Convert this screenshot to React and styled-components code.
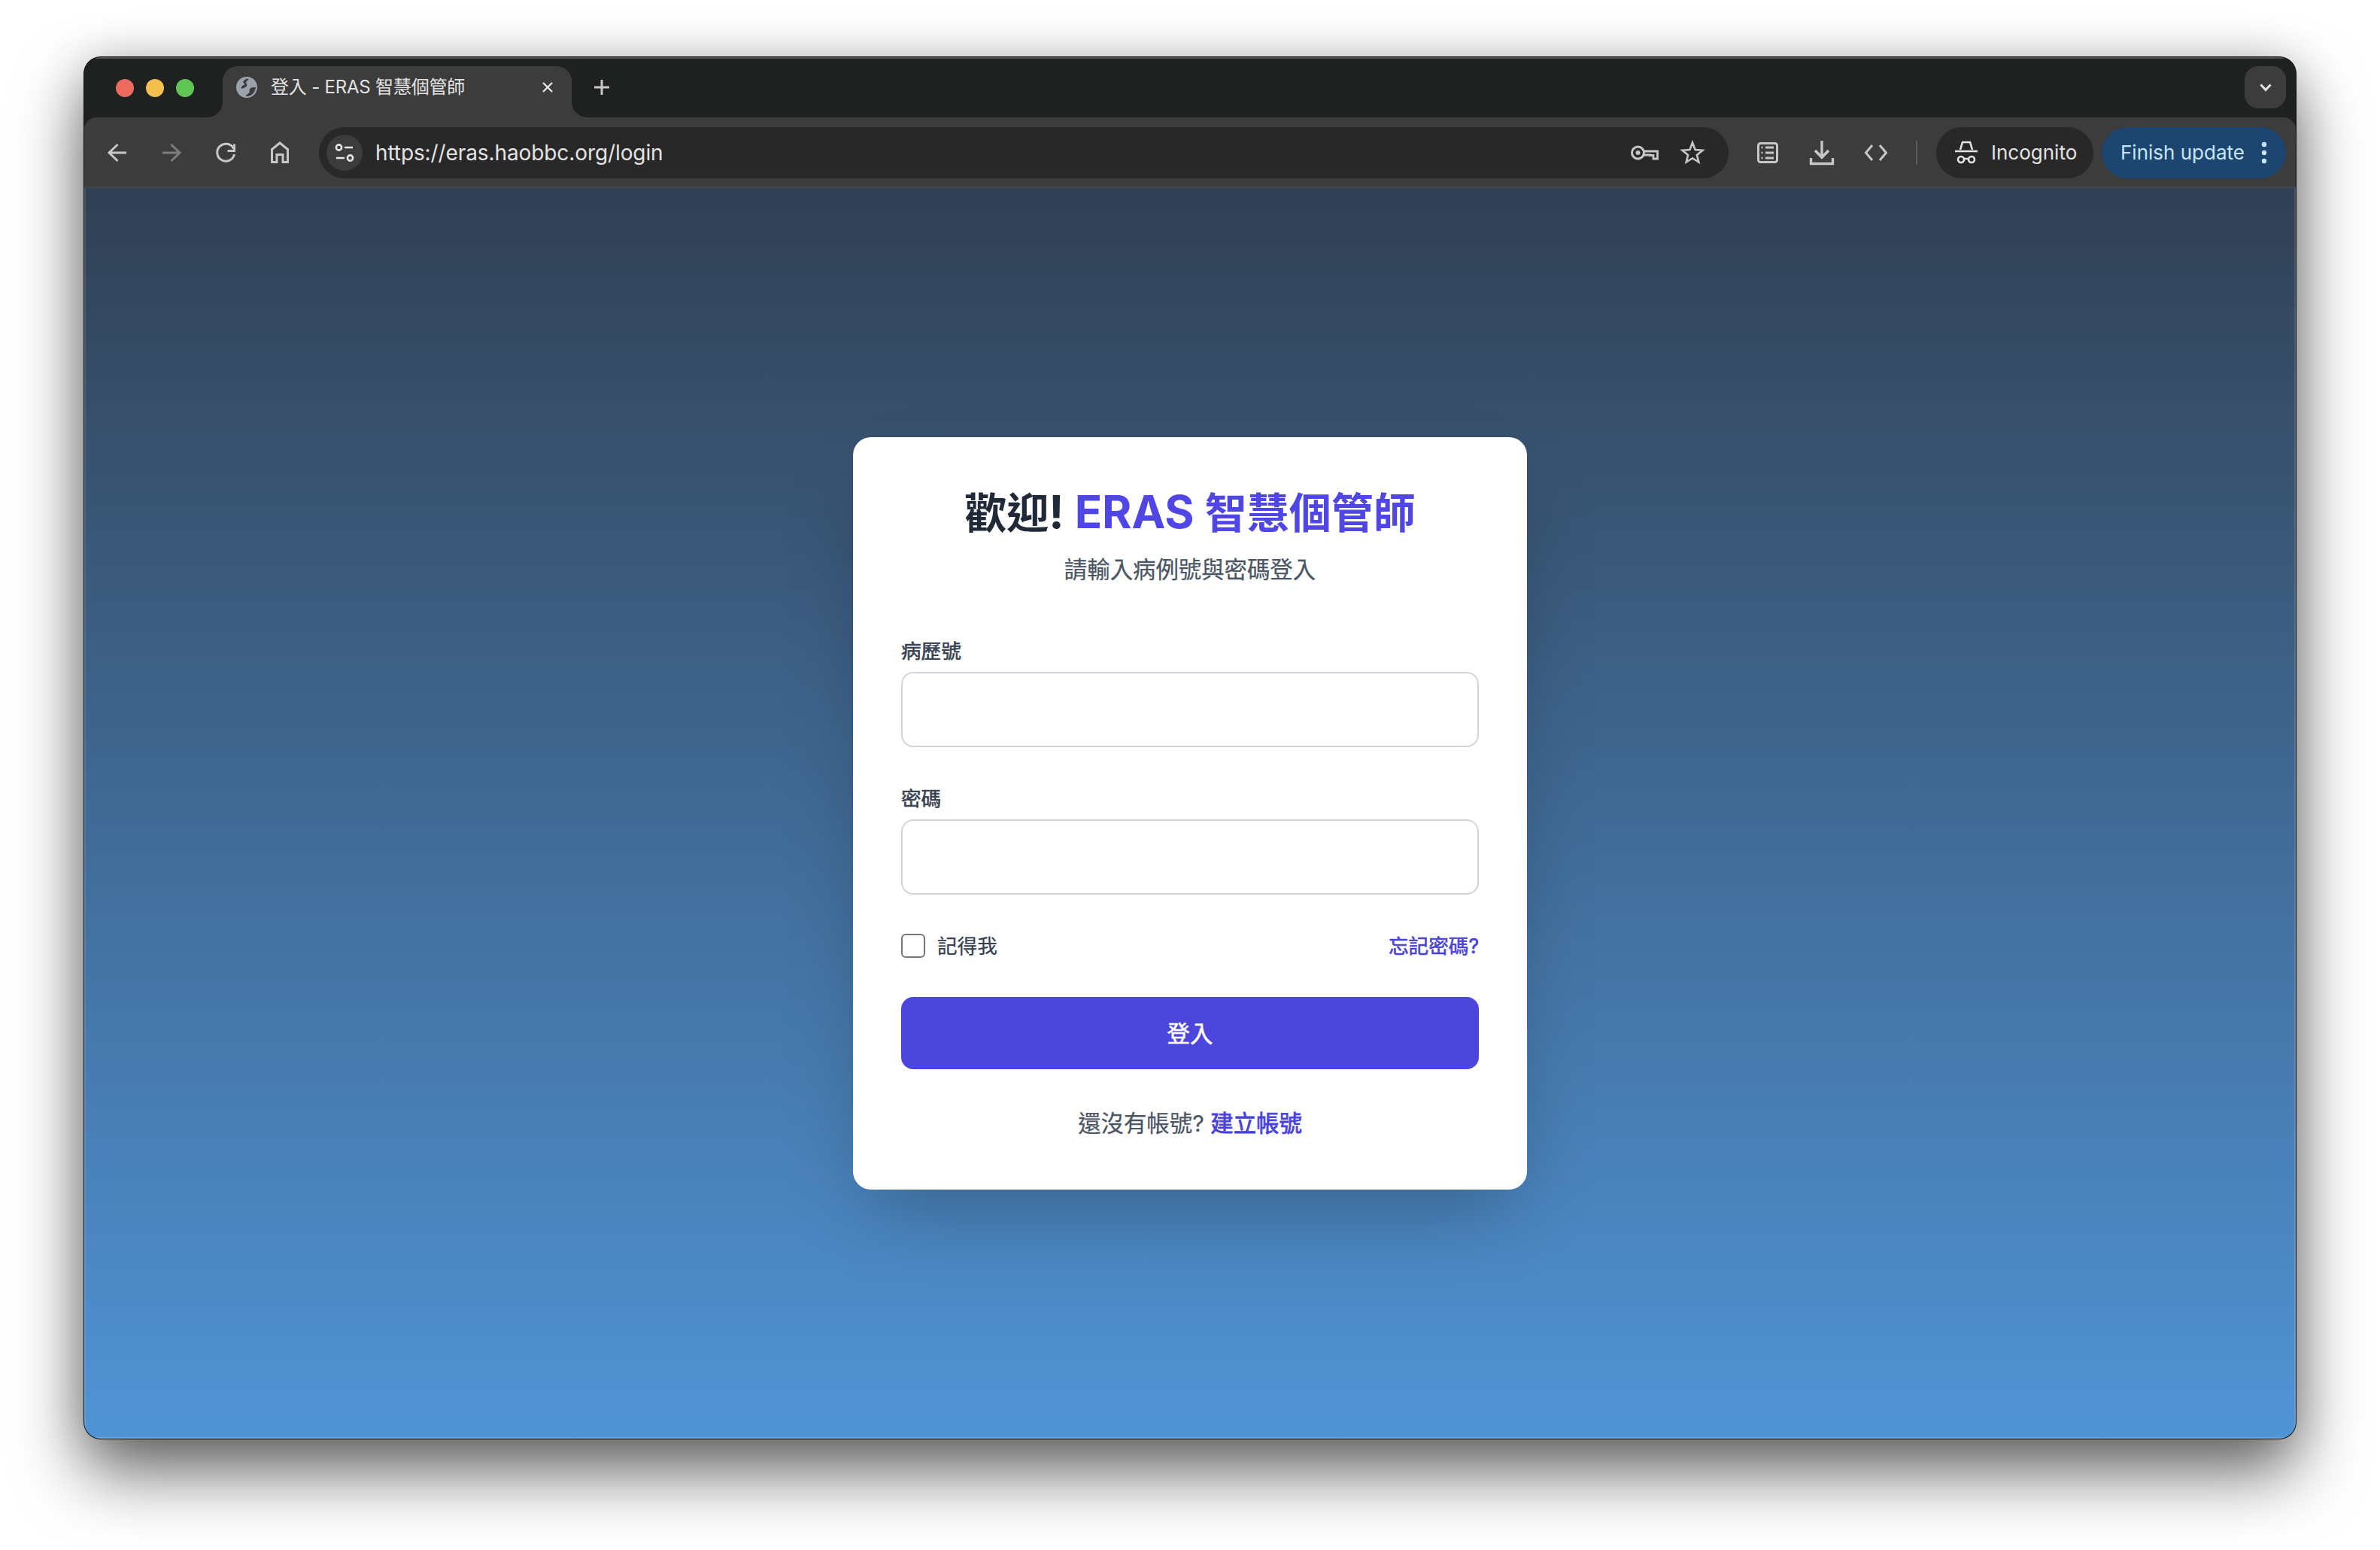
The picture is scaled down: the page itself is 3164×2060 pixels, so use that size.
import React from "react"
import styled, { createGlobalStyle } from "styled-components"

const GlobalStyle = createGlobalStyle`
  html, body {
    margin: 0;
    background: #fff;
    overflow: hidden;
  }
  * {
    box-sizing: border-box;
  }
`

const uiFont = `Inter, "Noto Sans CJK TC", sans-serif`

const Stage = styled.div`
  display: flex;
  width: 3164px;
  height: 2060px;
  padding: 76px 112px 148px 112px;
`

const BrowserWindow = styled.div`
  flex: 1;
  display: flex;
  flex-direction: column;
  overflow: hidden;
  border-radius: 22px;
  background: #1f2120;
  box-shadow: 0 0 0 1px #0c0c0c, 0 44px 90px rgba(0, 0, 0, 0.6), 0 0 60px rgba(0, 0, 0, 0.16);
`

const TabStrip = styled.div`
  display: flex;
  align-items: flex-end;
  height: 80px;
  padding: 0 13px 0 42px;
  box-shadow: inset 0 2px 0 #525252;
`

const Lights = styled.div`
  display: flex;
  gap: 16px;
  align-self: flex-start;
  margin-top: 29px;
  margin-right: 38px;
`

const Light = styled.span`
  width: 24px;
  height: 24px;
  border-radius: 50%;
  background: ${(p) => p.$color};
`

const Tab = styled.div`
  position: relative;
  display: flex;
  align-items: center;
  width: 464px;
  height: 68px;
  padding: 0 20px 12px 17px;
  border-radius: 20px 20px 0 0;
  background: #3c3c3c;

  &::before,
  &::after {
    content: "";
    position: absolute;
    bottom: 0;
    width: 20px;
    height: 20px;
  }
  &::before {
    left: -20px;
    background: radial-gradient(circle at 0 0, transparent 19.5px, #3c3c3c 20px);
  }
  &::after {
    right: -20px;
    background: radial-gradient(circle at 100% 0, transparent 19.5px, #3c3c3c 20px);
  }
`

const TabTitle = styled.span`
  flex: 1;
  margin-left: 17px;
  font: 400 24px/32px ${uiFont};
  letter-spacing: -0.2px;
  color: #e3e3e3;
  white-space: nowrap;
`

const IconSlot = styled.span`
  flex: none;
  display: flex;
  align-items: center;
  justify-content: center;
  width: ${(p) => p.$w || 72}px;
  height: ${(p) => p.$h || 68}px;
  color: ${(p) => p.$color || "#c7c7c7"};
`

const NewTab = styled(IconSlot)`
  align-self: flex-start;
  margin: 20px 0 0 20px;
  height: 40px;
  width: 40px;
`

const TabSearch = styled.div`
  display: flex;
  align-items: center;
  justify-content: center;
  align-self: flex-start;
  width: 55px;
  height: 56px;
  margin: 12px 0 0 auto;
  border-radius: 18px;
  background: #3c3c3c;
  color: #e3e3e3;
`

const Toolbar = styled.div`
  display: flex;
  align-items: center;
  height: 94px;
  padding: 2px 13px 0 8px;
  border-bottom: 2px solid #42474e;
  border-radius: 16px 16px 0 0;
  background: #3c3c3c;
`

const Omnibox = styled.div`
  flex: 1;
  display: flex;
  align-items: center;
  height: 68px;
  margin: 0 16px 0 16px;
  padding: 0 16px 0 10px;
  border-radius: 34px;
  background: #282828;
`

const SiteButton = styled.span`
  display: flex;
  align-items: center;
  justify-content: center;
  width: 48px;
  height: 48px;
  border-radius: 50%;
  background: #3c3c3c;
  color: #e3e3e3;
`

const Url = styled.span`
  flex: 1;
  margin-left: 17px;
  font: 400 28px/36px ${uiFont};
  letter-spacing: -0.1px;
  color: #e3e3e3;
`

const Separator = styled.span`
  width: 2px;
  height: 32px;
  margin: 0 25px 0 17px;
  background: #5c5c5c;
`

const Pill = styled.div`
  display: flex;
  align-items: center;
  height: 68px;
  border-radius: 34px;
  font: 400 26px/34px ${uiFont};
  white-space: nowrap;
  background: ${(p) => p.$bg};
  color: ${(p) => p.$fg};
`

const IncognitoPill = styled(Pill)`
  width: 209px;
  padding-left: 24px;
  gap: 17px;
`

const UpdatePill = styled(Pill)`
  width: 245px;
  margin-left: 11px;
  padding-left: 25px;
  gap: 19px;
`

const Page = styled.main`
  flex: 1;
  display: flex;
  align-items: center;
  justify-content: center;
  background: linear-gradient(180deg, #314054 0%, #5094d6 100%);
  box-shadow: inset 2px 0 0 rgba(255, 255, 255, 0.12), inset -2px 0 0 rgba(255, 255, 255, 0.12),
    inset 0 -2px 0 rgba(255, 255, 255, 0.16);
`

const Card = styled.form`
  width: 896px;
  padding: 64px;
  border-radius: 24px;
  background: #fff;
  box-shadow: 0 50px 100px -24px rgba(0, 0, 0, 0.25);
  font-family: ${uiFont};
`

const Header = styled.header`
  margin-bottom: 64px;
  text-align: center;
`

const Title = styled.h1`
  height: 72px;
  margin: 0;
  padding-top: 1px;
  font-size: 56px;
  line-height: 72px;
  font-weight: 700;
  color: #1f2937;
`

const TitleLatin = styled.span`
  font-size: 60px;
  line-height: 1;
`

const Brand = styled.span`
  color: #4f46e5;
`

const Subtitle = styled.p`
  margin: 16px 0 0;
  font-size: 30.4px;
  line-height: 48px;
  color: #4b5563;
  -webkit-text-stroke: 0.25px currentColor;
`

const Field = styled.div`
  margin-bottom: 48px;
`

const FieldLabel = styled.label`
  display: block;
  margin-bottom: 8px;
  font-size: 26.6px;
  line-height: 40px;
  color: #374151;
  -webkit-text-stroke: 0.6px currentColor;
`

const TextInput = styled.input`
  display: block;
  width: 100%;
  height: 100px;
  padding: 0 32px;
  border: 2px solid #d1d5db;
  border-radius: 16px;
  background: #fff;
  outline: none;
`

const OptionsRow = styled.div`
  display: flex;
  align-items: center;
  justify-content: space-between;
  height: 40px;
  margin-bottom: 48px;
`

const Remember = styled.label`
  display: flex;
  align-items: center;
  gap: 16px;
  font-size: 26.6px;
  line-height: 40px;
  color: #374151;
  -webkit-text-stroke: 0.25px currentColor;
`

const Checkbox = styled.input`
  appearance: none;
  width: 32px;
  height: 32px;
  margin: 0;
  border: 2px solid #767676;
  border-radius: 6px;
  background: #fff;
`

const SmallLink = styled.a`
  font-size: 26.6px;
  line-height: 40px;
  color: #4a42d8;
  -webkit-text-stroke: 0.6px currentColor;
`

const SubmitButton = styled.button`
  display: block;
  width: 100%;
  height: 96px;
  padding: 0 0 2px;
  border: 0;
  border-radius: 16px;
  background: #4d46dc;
  color: #fff;
  font-family: ${uiFont};
  font-size: 30.4px;
  -webkit-text-stroke: 0.6px currentColor;
`

const Footer = styled.p`
  margin: 48px 0 0;
  font-size: 30.4px;
  line-height: 48px;
  text-align: center;
  color: #4b5563;
  -webkit-text-stroke: 0.25px currentColor;
`

const StrongLink = styled.a`
  color: #4a42d8;
  -webkit-text-stroke: 0.8px currentColor;
`

const Icon = ({ w = 36, h = 36, children }) => (
  <svg
    width={w}
    height={h}
    viewBox={`0 0 ${w} ${h}`}
    fill="none"
    stroke="currentColor"
    strokeWidth="3"
  >
    {children}
  </svg>
)

const Globe = () => (
  <svg width="30" height="30" viewBox="0 0 30 30">
    <circle cx="15" cy="15" r="14" fill="#9aa2ab" />
    <path
      d="M15 3.5C10.5 5.5 9 8.5 11.5 10C14 11.5 9.5 12 8 14.5C6.5 17 8 17 11 16C15 14.5 16.5 12.5 14.5 10C13 8 16 6 18 4.5Z"
      fill="#3c3c3c"
    />
    <path
      d="M27 15C24 15 20 15 19 17.5C18 20 20 21 17.5 23C15.5 24.5 14 25.5 13.5 27C18 27.5 22 25.5 24 22.5C25.5 20.5 26.5 18 27 15Z"
      fill="#3c3c3c"
    />
  </svg>
)

const App = () => {
  return (
    <Stage>
      <GlobalStyle />
      <BrowserWindow>
        <TabStrip>
          <Lights>
            <Light $color="#ed6a5e" />
            <Light $color="#f5bf4f" />
            <Light $color="#61c554" />
          </Lights>
          <Tab>
            <Globe />
            <TabTitle>登入 - ERAS 智慧個管師</TabTitle>
            <IconSlot $w={24} $h={24} $color="#e3e3e3">
              <Icon w={20} h={20}>
                <path d="M4 4 16 16M16 4 4 16" strokeWidth="2.4" />
              </Icon>
            </IconSlot>
          </Tab>
          <NewTab $color="#c7c7c7">
            <Icon w={24} h={24}>
              <path d="M12 2V22M2 12H22" />
            </Icon>
          </NewTab>
          <TabSearch>
            <Icon w={18} h={12}>
              <path d="M2.5 2.5 9 9.5 15.5 2.5" />
            </Icon>
          </TabSearch>
        </TabStrip>
        <Toolbar>
          <IconSlot>
            <Icon>
              <path d="M30 18H7M18.5 7 7 18 18.5 29" />
            </Icon>
          </IconSlot>
          <IconSlot $color="#7d7d7d">
            <Icon>
              <path d="M6 18H29M17.5 7 29 18 17.5 29" />
            </Icon>
          </IconSlot>
          <IconSlot>
            <Icon>
              <path d="M28.5 12.5A11.5 11.5 0 1 0 29.5 20" />
              <path d="M29.5 6.5V15.5H20.5" />
            </Icon>
          </IconSlot>
          <IconSlot>
            <Icon>
              <path d="M7.5 30.5V13.5L18 5 28.5 13.5V30.5H22V20.5H14V30.5Z" />
            </Icon>
          </IconSlot>
          <Omnibox>
            <SiteButton>
              <Icon w={28} h={28}>
                <circle cx="6.5" cy="7" r="3.6" strokeWidth="2.6" />
                <path d="M14 7H25M3 21H14" strokeWidth="2.6" />
                <circle cx="21.5" cy="21" r="3.6" strokeWidth="2.6" />
              </Icon>
            </SiteButton>
            <Url>https://eras.haobbc.org/login</Url>
            <IconSlot $w={64}>
              <Icon w={40} h={24}>
                <circle cx="11.5" cy="12" r="8" />
                <circle cx="11.5" cy="12" r="3" fill="currentColor" stroke="none" />
                <path d="M19.5 10H37.5V20H32V15.5H27.5V15H19" strokeWidth="2.8" />
              </Icon>
            </IconSlot>
            <IconSlot $w={64}>
              <Icon>
                <path
                  d="M18 4.5 21.6 14 31.5 14.7 23.9 21 26.3 30.5 18 25.2 9.7 30.5 12.1 21 4.5 14.7 14.4 14Z"
                  strokeWidth="2.6"
                />
              </Icon>
            </IconSlot>
          </Omnibox>
          <IconSlot>
            <Icon>
              <rect x="5.5" y="5.5" width="25" height="25" rx="3" />
              <path d="M15 11H26M15 18H26M15 25H26" />
              <path d="M9.5 11H11.5M9.5 18H11.5M9.5 25H11.5" strokeWidth="2.4" />
            </Icon>
          </IconSlot>
          <IconSlot>
            <Icon>
              <path d="M18 2V23" strokeWidth="3.4" />
              <path d="M9 15 18 24 27 15" strokeWidth="3.8" />
              <path d="M3.5 25V32.5H32.5V25" strokeWidth="3.4" />
            </Icon>
          </IconSlot>
          <IconSlot>
            <Icon>
              <path d="M13 8 4.5 18 13 28M23 8 31.5 18 23 28" />
            </Icon>
          </IconSlot>
          <Separator />
          <IncognitoPill $bg="#282828" $fg="#e3e3e3">
            <Icon w={32} h={34}>
              <path d="M8 13 11 3H21L24 13" strokeWidth="2.6" />
              <path d="M1 15H31" strokeWidth="2.6" />
              <circle cx="9" cy="26" r="4" strokeWidth="2.6" />
              <circle cx="23" cy="26" r="4" strokeWidth="2.6" />
              <path d="M13 25H19" strokeWidth="2.6" />
            </Icon>
            Incognito
          </IncognitoPill>
          <UpdatePill $bg="#1c4670" $fg="#c7e4fb">
            Finish update
            <Icon w={14} h={34}>
              <circle cx="7" cy="6" r="3.2" fill="currentColor" stroke="none" />
              <circle cx="7" cy="17" r="3.2" fill="currentColor" stroke="none" />
              <circle cx="7" cy="28" r="3.2" fill="currentColor" stroke="none" />
            </Icon>
          </UpdatePill>
        </Toolbar>
        <Page>
          <Card>
            <Header>
              <Title>
                歡迎<TitleLatin>! </TitleLatin>
                <Brand>
                  <TitleLatin>ERAS </TitleLatin>智慧個管師
                </Brand>
              </Title>
              <Subtitle>請輸入病例號與密碼登入</Subtitle>
            </Header>
            <Field>
              <FieldLabel htmlFor="mrn">病歷號</FieldLabel>
              <TextInput id="mrn" type="text" />
            </Field>
            <Field>
              <FieldLabel htmlFor="password">密碼</FieldLabel>
              <TextInput id="password" type="password" />
            </Field>
            <OptionsRow>
              <Remember>
                <Checkbox type="checkbox" />
                記得我
              </Remember>
              <SmallLink>忘記密碼?</SmallLink>
            </OptionsRow>
            <SubmitButton type="button">登入</SubmitButton>
            <Footer>
              還沒有帳號? <StrongLink>建立帳號</StrongLink>
            </Footer>
          </Card>
        </Page>
      </BrowserWindow>
    </Stage>
  )
}

export default App
